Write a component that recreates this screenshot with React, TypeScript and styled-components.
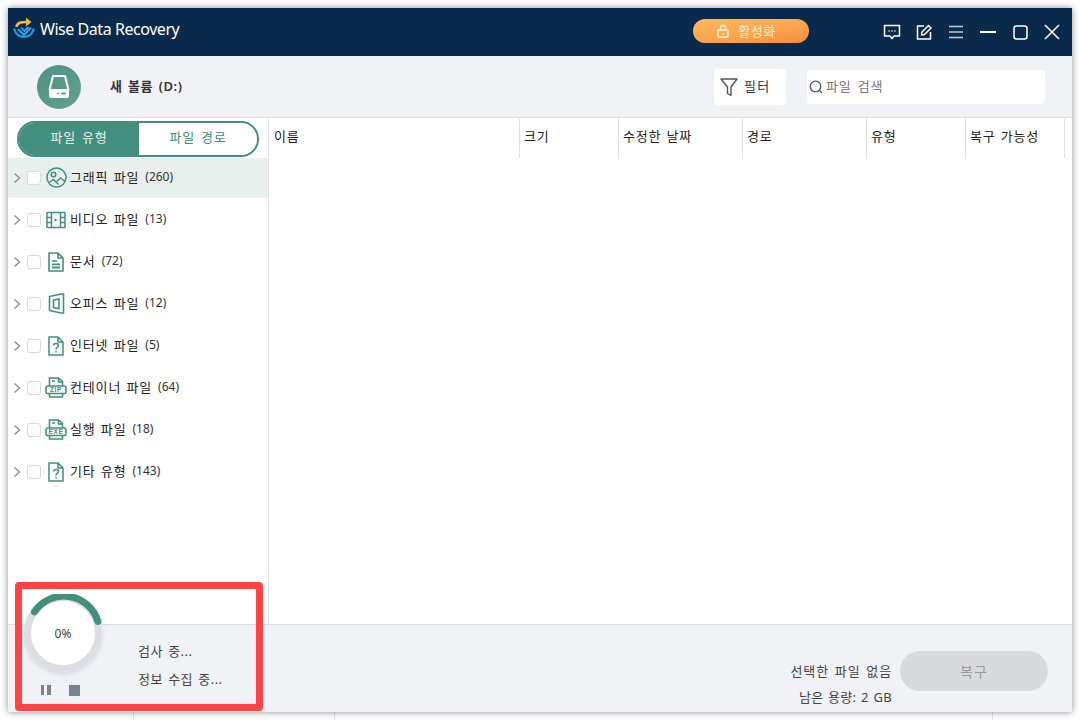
import React from "react";
import styled, { createGlobalStyle } from "styled-components";

const KR = `"Noto Sans", "Noto Sans CJK KR", sans-serif`;
const GREEN = "#428f7d";

const Global = createGlobalStyle`
  html, body { margin: 0; padding: 0; background: #fff; }
  body { width: 1080px; height: 720px; overflow: hidden; font-family: ${KR}; }
  * { box-sizing: border-box; }
`;

const Page = styled.div`
  position: relative;
  width: 1080px;
  height: 720px;
  padding: 8px;
`;
const BehindLine = styled.i<{ $x: number }>`
  position: absolute;
  left: ${(p) => p.$x}px;
  top: 712px;
  width: 1px;
  height: 8px;
  background: #e2e2e2;
`;
const Window = styled.div`
  position: relative;
  width: 1064px;
  height: 704px;
  display: flex;
  flex-direction: column;
  background: #fff;
  box-shadow: 0 0 7px rgba(0, 0, 0, 0.45);
`;
const TitleBar = styled.header`
  height: 48px;
  flex: none;
  display: flex;
  align-items: center;
  background: #0a2a4c;
  padding: 0 4px 0 4px;
`;
const Brand = styled.div`
  display: flex;
  align-items: center;
  gap: 4px;
  color: #fff;
  font-size: 16px;
  letter-spacing: -0.45px;
  line-height: 20px;
  padding-bottom: 7px;
`;
const ActivateBtn = styled.button`
  margin: 0 0 2px auto;
  width: 116px;
  height: 24px;
  border: 0;
  border-radius: 12px;
  display: flex;
  align-items: center;
  justify-content: center;
  gap: 8px;
  padding: 0 10px 1px 0;
  background: linear-gradient(170deg, #fdbb5e 0%, #fba24c 60%, #f98a3c 100%);
  color: #fff3dc;
  font: 13px ${KR};
  letter-spacing: 0.5px;
`;
const WinButtons = styled.div`
  margin-left: 67px;
  display: flex;
`;
const WinBtn = styled.div`
  width: 32px;
  height: 32px;
  display: flex;
  align-items: center;
  justify-content: center;
`;
const Toolbar = styled.div`
  height: 62px;
  flex: none;
  display: flex;
  align-items: center;
  background: #f1f2f5;
  border-bottom: 1px solid #dcdde0;
  padding: 0 27px 0 29px;
`;
const DriveBadge = styled.div`
  width: 44px;
  height: 44px;
  border-radius: 50%;
  display: flex;
  align-items: center;
  justify-content: center;
  background: linear-gradient(135deg, #4d9281, #62a08f);
`;
const DriveName = styled.div`
  margin-left: 29px;
  padding-bottom: 2px;
  font-size: 13px;
  font-weight: 600;
  letter-spacing: 0.6px;
  word-spacing: 1.5px;
  color: #333;
`;
const FilterBtn = styled.div`
  margin-left: auto;
  width: 72px;
  height: 36px;
  border-radius: 4px;
  background: #fff;
  display: flex;
  align-items: center;
  gap: 6px;
  padding-left: 6px;
  font-size: 13px;
  letter-spacing: 1.2px;
  color: #333;
`;
const SearchBox = styled.div`
  margin-left: 21px;
  width: 238px;
  height: 34px;
  border-radius: 4px;
  background: #fff;
  display: flex;
  align-items: center;
  gap: 3px;
  padding-left: 2px;
  font-size: 13px;
  letter-spacing: 0.8px;
  word-spacing: 2px;
  color: #777;
`;
const ToolLabel = styled.span`
  padding-bottom: 3px;
`;
const Body = styled.div`
  flex: 1;
  min-height: 0;
  display: flex;
`;
const Sidebar = styled.aside`
  width: 261px;
  flex: none;
  border-right: 1px solid #dfe0e2;
  display: flex;
  flex-direction: column;
  padding-top: 3px;
`;
const Tabs = styled.div`
  margin-left: 9px;
  width: 242px;
  height: 36px;
  display: flex;
  border: 2px solid ${GREEN};
  border-radius: 18px;
  overflow: hidden;
  flex: none;
`;
const Tab = styled.div<{ $active?: boolean }>`
  flex: ${(p) => (p.$active ? "0 0 120px" : "1")};
  display: flex;
  align-items: center;
  justify-content: center;
  padding-bottom: 6px;
  font-size: 13px;
  letter-spacing: 0.8px;
  word-spacing: 2px;
  background: ${(p) => (p.$active ? GREEN : "#fff")};
  color: ${(p) => (p.$active ? "#e6f1ee" : GREEN)};
`;
const Tree = styled.div`
  margin-top: 1px;
  display: flex;
  flex-direction: column;
`;
const Row = styled.div<{ $selected?: boolean }>`
  height: 40px;
  margin-bottom: 2px;
  display: flex;
  align-items: center;
  padding-left: 4px;
  background: ${(p) => (p.$selected ? "#e8f0ee" : "transparent")};
  color: #222;
  font-size: 13px;
`;
const Check = styled.span`
  margin-left: 5px;
  width: 14px;
  height: 14px;
  border: 1px solid #d9d9d9;
  border-radius: 3px;
  background: #fff;
  flex: none;
`;
const IconSlot = styled.span`
  margin-left: 4px;
  width: 22px;
  height: 23px;
  padding-bottom: 1px;
  flex: none;
  display: flex;
  align-items: center;
  justify-content: center;
`;
const RowLabel = styled.span`
  margin-left: 3px;
  padding-bottom: 4px;
  letter-spacing: 0.85px;
  word-spacing: 1px;
`;
const Count = styled.span`
  margin-left: 6px;
  padding-bottom: 4px;
  font-size: 12px;
  color: #333;
`;
const Main = styled.main`
  flex: 1;
  min-width: 0;
`;
const HeadRow = styled.div`
  height: 40px;
  display: flex;
`;
const HeadCell = styled.div<{ $w: number }>`
  width: ${(p) => p.$w}px;
  flex: none;
  border-right: 1px solid #dfe0e2;
  padding: 9px 0 0 4px;
  font-size: 13px;
  line-height: 18px;
  letter-spacing: 0.8px;
  word-spacing: 1px;
  color: #222;
  &:first-child {
    padding-left: 5px;
  }
`;
const Footer = styled.footer`
  height: 88px;
  flex: none;
  display: flex;
  background: #f1f2f5;
  border-top: 1px solid #dcdddf;
  padding: 0 24px 0 130px;
`;
const StatusCol = styled.div`
  display: flex;
  flex-direction: column;
  gap: 10px;
  padding-top: 17px;
  font-size: 13px;
  line-height: 18px;
  letter-spacing: 0.45px;
  word-spacing: 1.5px;
  color: #444;
`;
const RightCol = styled.div`
  margin-left: auto;
  display: flex;
  flex-direction: column;
  align-items: flex-end;
  gap: 8px;
  padding-top: 37px;
  font-size: 13px;
  line-height: 18px;
  color: #444;
`;
const RightLine = styled.span<{ $tight?: boolean }>`
  letter-spacing: ${(p) => (p.$tight ? "0.3px" : "0.9px")};
  word-spacing: ${(p) => (p.$tight ? "1px" : "1.5px")};
`;
const RecoverBtn = styled.button`
  margin: 26px 0 0 8px;
  width: 148px;
  height: 40px;
  border: 0;
  border-radius: 20px;
  background: #d9dadd;
  color: #9a9a9a;
  font: 14px ${KR};
  letter-spacing: 1px;
`;
const Gauge = styled.div`
  position: absolute;
  left: 16px;
  top: 586px;
  width: 78px;
  height: 108px;
`;
const Dial = styled.div`
  position: relative;
  width: 78px;
  height: 78px;
  border-radius: 50%;
  background: #fff;
  box-shadow: 0 2px 4px rgba(130, 160, 200, 0.35);
`;
const DialText = styled.div`
  position: absolute;
  inset: 0;
  display: flex;
  align-items: center;
  justify-content: center;
  font-size: 12px;
  color: #444;
`;
const Controls = styled.div`
  margin-top: 13px;
  display: flex;
  align-items: flex-start;
  padding-left: 17px;
  gap: 18px;
`;
const PauseBar = styled.span`
  display: block;
  width: 10px;
  height: 10px;
  background: linear-gradient(90deg, #7a848c 0 3.5px, transparent 3.5px 6.5px, #7a848c 6.5px);
`;
const StopBox = styled.span`
  display: block;
  width: 11px;
  height: 11px;
  background: #7a848c;
`;
const Highlight = styled.div`
  position: absolute;
  left: 15px;
  top: 582px;
  width: 248px;
  height: 129px;
  border: 7px solid #ff4246;
  border-radius: 4px;
  pointer-events: none;
`;

const Logo = () => (
  <svg width="24" height="24" viewBox="0 0 24 24" fill="none">
    <path d="M2.5 12.5 A9.8 9.8 0 0 0 21.5 12.5" stroke="#1e9be8" strokeWidth="2.4" strokeLinecap="round" />
    <path d="M6 12 L12 18 L19 10.5" stroke="#2aa4ec" strokeWidth="2" />
    <path d="M9 10.5 L12.5 14 L16.5 10" stroke="#2aa4ec" strokeWidth="1.8" />
    <path d="M4.5 10 C5 6 8 5 15 5" stroke="#f6b23c" strokeWidth="2.6" />
    <path d="M14 0.5 L19.5 5 L14 9.5 Z" fill="#f6b23c" />
  </svg>
);

const Stroke = ({ w = 20, h = 20, vb, children, sw = 1.5, c = "#fff" }: any) => (
  <svg width={w} height={h} viewBox={vb || `0 0 ${w} ${h}`} fill="none" stroke={c} strokeWidth={sw}>
    {children}
  </svg>
);

const ImageIcon = () => (
  <Stroke w={21} h={21} c={GREEN} sw={1.5}>
    <circle cx="10.5" cy="10.5" r="9.5" />
    <circle cx="7.5" cy="7.5" r="2.3" />
    <path d="M3 15.5 L7.5 12.5 L12.5 17.5 M10 15 L14.5 11 L19 14.5" />
  </Stroke>
);
const VideoIcon = () => (
  <Stroke w={20} h={18} c={GREEN} sw={1.5}>
    <rect x="1" y="1.5" width="18" height="15" rx="0.5" />
    <path d="M5.5 1.5 V16.5 M14.5 1.5 V16.5 M1 6.5 H5.5 M1 11.5 H5.5 M14.5 6.5 H19 M14.5 11.5 H19" />
    <path d="M8.5 7.2 L11.5 9 L8.5 10.8 Z" fill={GREEN} stroke="none" />
  </Stroke>
);
const DocIcon = () => (
  <Stroke w={16} h={20} c={GREEN} sw={1.6}>
    <path d="M1 1 H10 L15 6 V19 H1 Z M10 1 V6 H15" strokeLinejoin="round" />
    <path d="M4 9 H9" />
    <path d="M4 12.3 H12 M4 15.5 H12" strokeWidth="1.8" />
  </Stroke>
);
const OfficeIcon = () => (
  <Stroke w={17} h={21} c={GREEN} sw={1.6}>
    <path d="M1.5 3.5 L13 1 H15.5 V20 L13 20 L1.5 17.5 Z" strokeLinejoin="round" />
    <path d="M5.5 7 L11 6 V15.5 L5.5 14.5 Z" />
  </Stroke>
);
const QuestionIcon = () => (
  <Stroke w={16} h={20} c={GREEN} sw={1.5}>
    <path d="M1 1 H10 L15 6 V19 H1 Z M10 1 V6 H15" strokeLinejoin="round" />
    <path d="M5.5 9.5 C5.5 6.8 10.5 6.8 10.5 9.5 C10.5 11.5 8 11 8 13.5" />
    <path d="M8 14.7 V16.5" />
  </Stroke>
);
const ArchiveIcon = ({ label }: { label: string }) => (
  <svg width="22" height="21" viewBox="0 0 22 21" fill="none" stroke={GREEN} strokeWidth="1.6">
    <path d="M4.5 9 V1 H13.5 L17.5 4.5 V9 M4.5 16 V20 H17.5 V16" />
    <path d="M7 4 H10 M13.5 1 V5 H17.5" />
    <rect x="1" y="9" width="20" height="7.5" rx="1.5" fill="#fff" />
    <text x="11" y="15.2" textAnchor="middle" fontSize="6.5" fontWeight="700" letterSpacing="0.6" fill={GREEN} stroke="none" fontFamily="Liberation Sans, sans-serif">
      {label}
    </text>
  </svg>
);
const Chevron = () => (
  <svg width="10" height="12" viewBox="0 0 10 12" fill="none" stroke="#8b9199" strokeWidth="1.4">
    <path d="M2.5 1.5 L7.5 6 L2.5 10.5" />
  </svg>
);

const rows = [
  { label: "그래픽 파일", count: 260, icon: <ImageIcon />, selected: true },
  { label: "비디오 파일", count: 13, icon: <VideoIcon /> },
  { label: "문서", count: 72, icon: <DocIcon /> },
  { label: "오피스 파일", count: 12, icon: <OfficeIcon /> },
  { label: "인터넷 파일", count: 5, icon: <QuestionIcon /> },
  { label: "컨테이너 파일", count: 64, icon: <ArchiveIcon label="ZIP" /> },
  { label: "실행 파일", count: 18, icon: <ArchiveIcon label="EXE" /> },
  { label: "기타 유형", count: 143, icon: <QuestionIcon /> },
];

const columns: [string, number][] = [
  ["이름", 251],
  ["크기", 99],
  ["수정한 날짜", 124],
  ["경로", 124],
  ["유형", 99],
  ["복구 가능성", 99],
];

export default function App() {
  return (
    <Page>
      <Global />
      <BehindLine $x={133} />
      <BehindLine $x={334} />
      <BehindLine $x={992} />
      <Window>
        <TitleBar>
          <Brand>
            <Logo />
            Wise Data Recovery
          </Brand>
          <ActivateBtn>
            <Stroke w={14} h={14} c="#fff3dc" sw={1.4}>
              <rect x="2" y="6" width="10" height="7" rx="1" />
              <path d="M4.5 6 V4 a2.5 2.5 0 0 1 5 0 V6" />
              <path d="M7 9 V10.5" />
            </Stroke>
            활성화
          </ActivateBtn>
          <WinButtons>
            <WinBtn>
              <Stroke w={18} h={16}>
                <path d="M1.5 1.5 H16.5 V12 H11 L9 14.5 L7 12 H1.5 Z" strokeLinejoin="round" />
                <path d="M5.5 7 H6.7 M8.4 7 H9.6 M11.3 7 H12.5" strokeWidth="1.6" />
              </Stroke>
            </WinBtn>
            <WinBtn>
              <Stroke w={16} h={16}>
                <path d="M8 2 H1.5 V15 H14.5 V8" strokeLinejoin="round" />
                <path d="M5.5 11 L6 8 L12.5 1.5 L15 4 L8.5 10.5 Z" strokeLinejoin="round" />
              </Stroke>
            </WinBtn>
            <WinBtn>
              <Stroke w={16} h={14} c="#c3cad2">
                <path d="M1 1.5 H15 M1 7 H15 M1 12.5 H15" />
              </Stroke>
            </WinBtn>
            <WinBtn>
              <Stroke w={16} h={4} sw={2}>
                <path d="M0 2 H16" />
              </Stroke>
            </WinBtn>
            <WinBtn>
              <Stroke w={15} h={15}>
                <rect x="1" y="1" width="13" height="13" rx="2.5" />
              </Stroke>
            </WinBtn>
            <WinBtn>
              <Stroke w={16} h={16}>
                <path d="M1 1 L15 15 M15 1 L1 15" />
              </Stroke>
            </WinBtn>
          </WinButtons>
        </TitleBar>

        <Toolbar>
          <DriveBadge>
            <svg width="22" height="24" viewBox="0 0 22 24">
              <path d="M5 1 H17 L20.5 15 H1.5 Z" fill="none" stroke="#fff" strokeWidth="2" strokeLinejoin="round" />
              <rect x="1" y="14" width="20" height="9" rx="2" fill="#fff" />
              <circle cx="10" cy="18.5" r="1" fill="#5a9a89" />
              <rect x="13" y="17.5" width="5" height="2" rx="1" fill="#5a9a89" />
            </svg>
          </DriveBadge>
          <DriveName>새 볼륨 (D:)</DriveName>
          <FilterBtn>
            <Stroke w={18} h={20} c="#555" sw={1.4}>
              <path d="M1 2 H17 L11 10 V18.5 L7.5 16.5 V10 Z" strokeLinejoin="round" />
            </Stroke>
            <ToolLabel>필터</ToolLabel>
          </FilterBtn>
          <SearchBox>
            <Stroke w={14} h={14} c="#555" sw={1.3}>
              <circle cx="6.5" cy="6.5" r="5.3" />
              <path d="M10.5 10.5 L13 13" />
            </Stroke>
            <ToolLabel>파일 검색</ToolLabel>
          </SearchBox>
        </Toolbar>

        <Body>
          <Sidebar>
            <Tabs>
              <Tab $active>파일 유형</Tab>
              <Tab>파일 경로</Tab>
            </Tabs>
            <Tree>
              {rows.map((r) => (
                <Row key={r.label} $selected={r.selected}>
                  <Chevron />
                  <Check />
                  <IconSlot>{r.icon}</IconSlot>
                  <RowLabel>{r.label}</RowLabel>
                  <Count>({r.count})</Count>
                </Row>
              ))}
            </Tree>
          </Sidebar>
          <Main>
            <HeadRow>
              {columns.map(([t, w]) => (
                <HeadCell key={t} $w={w}>
                  {t}
                </HeadCell>
              ))}
            </HeadRow>
          </Main>
        </Body>

        <Footer>
          <StatusCol>
            <span>검사 중...</span>
            <span>정보 수집 중...</span>
          </StatusCol>
          <RightCol>
            <RightLine>선택한 파일 없음</RightLine>
            <RightLine $tight>남은 용량: 2 GB</RightLine>
          </RightCol>
          <RecoverBtn>복구</RecoverBtn>
        </Footer>

        <Gauge>
          <Dial>
            <svg width="78" height="78" viewBox="0 0 78 78" fill="none" strokeWidth="7">
              <circle cx="39" cy="39" r="35.5" stroke="#dddee2" />
              <path d="M10.5 17.8 A35.5 35.5 0 0 1 74 27.5" stroke={GREEN} strokeLinecap="round" />
            </svg>
            <DialText>0%</DialText>
          </Dial>
          <Controls>
            <PauseBar />
            <StopBox />
          </Controls>
        </Gauge>
      </Window>
      <Highlight />
    </Page>
  );
}
